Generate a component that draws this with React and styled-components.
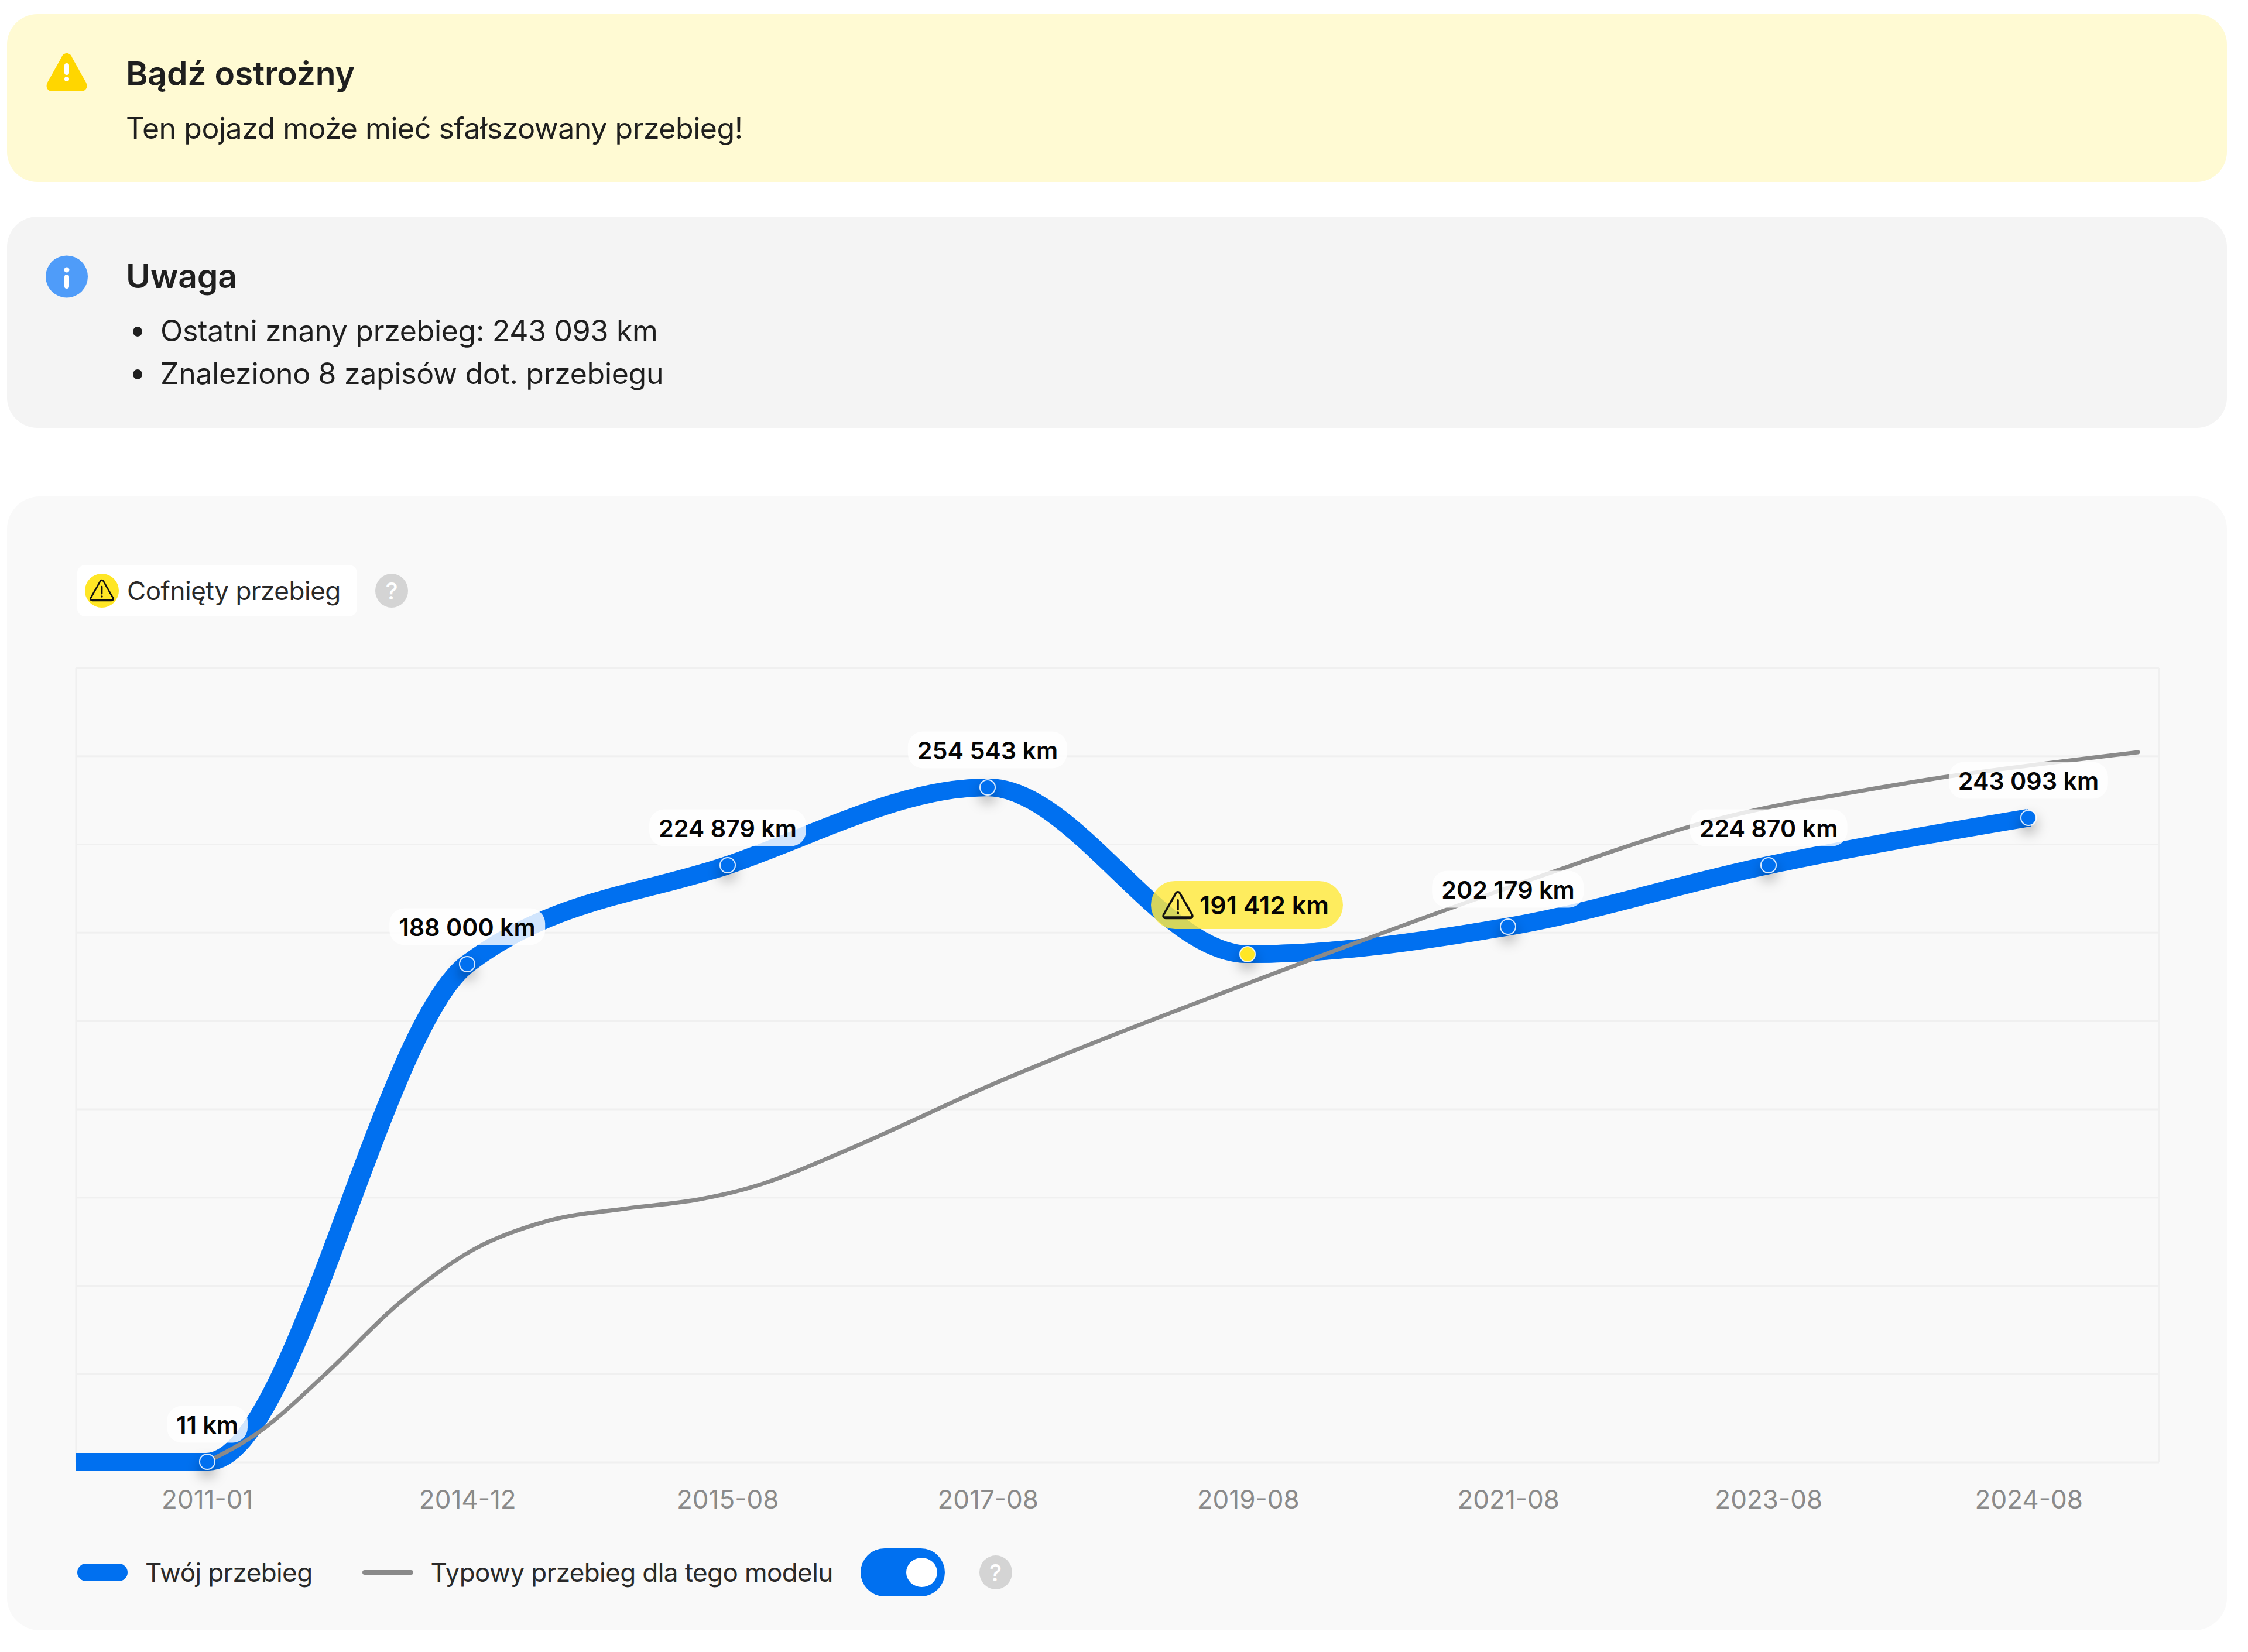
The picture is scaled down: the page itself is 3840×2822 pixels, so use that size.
import React from "react";
import styled, { createGlobalStyle } from "styled-components";

const PLOT_X = 130;
const PLOT_Y = 1140;
const PLOT_W = 3558;
const PLOT_H = 1357;

const mileage = [
  { x: 354, y: 2496, label: "11 km", date: "2011-01" },
  { x: 798, y: 1646, label: "188 000 km", date: "2014-12" },
  { x: 1243, y: 1477, label: "224 879 km", date: "2015-08" },
  { x: 1687, y: 1344, label: "254 543 km", date: "2017-08" },
  { x: 2131, y: 1629, label: "191 412 km", date: "2019-08", warn: true },
  { x: 2576, y: 1582, label: "202 179 km", date: "2021-08" },
  { x: 3021, y: 1477, label: "224 870 km", date: "2023-08" },
  { x: 3465, y: 1396, label: "243 093 km", date: "2024-08" },
];

const typical = [
  [354, 2496],
  [447, 2442],
  [555, 2347],
  [683, 2224],
  [810, 2133],
  [938, 2084],
  [1065, 2064],
  [1193, 2048],
  [1300, 2022],
  [1455, 1960],
  [1710, 1845],
  [2131, 1679],
  [2668, 1483],
  [2883, 1412],
  [3021, 1378],
  [3138, 1357],
  [3331, 1325],
  [3652, 1284],
];

// same idea as d3 curveMonotoneX
const monotonePath = (pts) => {
  const n = pts.length;
  const slopes = [];
  for (let i = 0; i < n - 1; i++) {
    slopes.push((pts[i + 1][1] - pts[i][1]) / (pts[i + 1][0] - pts[i][0]));
  }
  const inner = pts.map((_, i) => {
    if (i === 0 || i === n - 1) return 0;
    const a = slopes[i - 1];
    const b = slopes[i];
    if (a * b <= 0) return 0;
    return Math.sign(a) * Math.min(Math.abs(a), Math.abs(b), Math.abs(a + b) / 4) * 2;
  });
  inner[0] = (3 * slopes[0] - inner[1]) / 2;
  inner[n - 1] = (3 * slopes[n - 2] - inner[n - 2]) / 2;
  let d = `M${pts[0][0]} ${pts[0][1]}`;
  for (let i = 0; i < n - 1; i++) {
    const h = (pts[i + 1][0] - pts[i][0]) / 3;
    d += `C${pts[i][0] + h} ${pts[i][1] + inner[i] * h} ${pts[i + 1][0] - h} ${pts[i + 1][1] - inner[i + 1] * h} ${pts[i + 1][0]} ${pts[i + 1][1]}`;
  }
  return d;
};

const GlobalStyle = createGlobalStyle`
  html, body {
    margin: 0;
    padding: 0;
    background: #fff;
  }
  body {
    font-family: Inter, "Noto Sans", sans-serif;
    color: #1f1f1f;
  }
`;

const Page = styled.div`
  width: 3792px;
  padding: 24px 24px 38px 12px;
  display: flex;
  flex-direction: column;
`;

const Alert = styled.div`
  display: grid;
  grid-template-columns: 72px 1fr;
  column-gap: 65px;
  padding: ${(p) => p.$padding};
  margin-bottom: ${(p) => p.$after};
  height: ${(p) => p.$height};
  box-sizing: border-box;
  border-radius: 52px;
  background: ${(p) => p.$bg};
`;

const AlertBody = styled.div`
  display: flex;
  flex-direction: column;
`;

const AlertTitle = styled.div`
  font-size: 57px;
  font-weight: 600;
  line-height: 72px;
  letter-spacing: -0.2px;
  margin-bottom: 21px;
`;

const AlertText = styled.div`
  font-size: 50px;
  line-height: 72px;
  letter-spacing: -0.47px;
`;

const Bullets = styled.ul`
  margin: 0;
  padding: 0;
  list-style: none;
  font-size: 50px;
  line-height: 73px;
  letter-spacing: -0.3px;
`;

const Bullet = styled.li`
  display: flex;
  align-items: center;
  &::before {
    content: "";
    width: 16px;
    height: 17px;
    margin: 2px 31px 0 12px;
    border-radius: 50%;
    background: #1f1f1f;
  }
`;

const ChartCard = styled.section`
  height: 1937px;
  box-sizing: border-box;
  padding: 117px 116px 0 118px;
  border-radius: 56px;
  background: #f9f9f9;
`;

const FlagRow = styled.div`
  display: flex;
  align-items: center;
  gap: 31px;
  height: 88px;
  margin-left: 2px;
  margin-bottom: 88px;
`;

const Flag = styled.div`
  display: flex;
  align-items: center;
  gap: 14px;
  width: 478px;
  height: 88px;
  box-sizing: border-box;
  padding-left: 13px;
  border-radius: 14px;
  background: #fff;
  font-size: 44px;
  letter-spacing: -0.45px;
  color: #2a2a2a;
`;

const FlagDot = styled.span`
  display: flex;
  align-items: center;
  justify-content: center;
  width: 58px;
  height: 58px;
  border-radius: 50%;
  background: #ffe625;
`;

const Help = styled.span`
  display: flex;
  align-items: center;
  justify-content: center;
  width: 56px;
  height: 58px;
  border-radius: 50%;
  background: #d4d4d4;
  color: #fff;
  font-size: 40px;
  font-weight: 500;
  letter-spacing: 0;
`;

const Plot = styled.div`
  position: relative;
  width: ${PLOT_W}px;
  height: ${PLOT_H}px;
`;

const PlotSvg = styled.svg`
  display: block;
  overflow: visible;
`;

const ValueLabel = styled.div`
  position: absolute;
  display: flex;
  align-items: center;
  gap: 10px;
  transform: translate(-50%, -50%);
  white-space: nowrap;
  height: ${(p) => (p.$warn ? 82 : 63)}px;
  padding: ${(p) => (p.$warn ? "0 24px 0 19px" : "0 16px")};
  border-radius: ${(p) => (p.$warn ? 41 : 26)}px;
  background: ${(p) => (p.$warn ? "rgba(255, 233, 63, 0.83)" : "rgba(255, 255, 255, 0.82)")};
  font-size: ${(p) => (p.$warn ? 43 : 41.3)}px;
  font-weight: 600;
  color: #050505;
`;

const AxisRow = styled.div`
  display: grid;
  grid-template-columns: repeat(8, 444.5px);
  margin: 38px 0 0 2px;
  height: 50px;
`;

const AxisTick = styled.span`
  text-align: center;
  font-size: 44px;
  line-height: 50px;
  color: #8a8a8a;
`;

const Legend = styled.div`
  display: flex;
  align-items: center;
  height: 82px;
  margin: 59px 0 0 2px;
  font-size: 44px;
  letter-spacing: -0.6px;
  color: #2a2a2a;
`;

const Swatch = styled.span`
  width: ${(p) => p.$w}px;
  height: ${(p) => p.$h}px;
  margin-right: 30px;
  border-radius: ${(p) => p.$h / 2}px;
  background: ${(p) => p.$color};
`;

const LegendText = styled.span`
  margin-right: ${(p) => p.$after}px;
`;

const Toggle = styled.span`
  display: flex;
  align-items: center;
  justify-content: flex-end;
  width: 144px;
  height: 82px;
  box-sizing: border-box;
  padding-right: 13px;
  margin-right: 59px;
  border-radius: 41px;
  background: #0070f0;
`;

const Thumb = styled.span`
  width: 53px;
  height: 50px;
  border-radius: 50%;
  background: #fff;
`;

const WarningIcon = () => (
  <svg width="72" height="68" viewBox="0 0 72 68">
    <path
      d="M36 1C40 1 43 3 45 8L69 51C73 60 68 66 60 66L12 66C4 66 -1 60 3 51L27 8C29 3 32 1 36 1Z"
      fill="#ffd600"
    />
    <rect x="32" y="18" width="8" height="20" rx="4" fill="#fff" />
    <circle cx="36" cy="45" r="4" fill="#fff" />
  </svg>
);

const InfoIcon = () => (
  <svg width="72" height="73" viewBox="0 0 72 73">
    <circle cx="36" cy="36.5" r="36" fill="#4f9cf9" />
    <circle cx="36" cy="25" r="4.5" fill="#fff" />
    <rect x="32" y="33" width="8" height="24" rx="4" fill="#fff" />
  </svg>
);

const TriangleMark = ({ size }) => (
  <svg width={size} height={size * 0.93} viewBox="0 0 52 48" fill="none">
    <path
      d="M26 2.5C27.5 2.5 28.6 3.3 29.4 4.7L49.3 39.5C50.9 42.4 49.6 45.5 46 45.5L6 45.5C2.4 45.5 1.1 42.4 2.7 39.5L22.6 4.7C23.4 3.3 24.5 2.5 26 2.5Z"
      stroke="#111"
      strokeWidth="3.4"
      strokeLinejoin="round"
    />
    <path d="M4 44.5L48 44.5" stroke="#111" strokeWidth="4" strokeLinecap="round" />
    <path d="M26 16L26 31" stroke="#111" strokeWidth="3.4" strokeLinecap="round" />
    <circle cx="26" cy="37" r="2.2" fill="#111" />
  </svg>
);

const App = () => {
  const bluePoints = [[PLOT_X + 2, 2496], ...mileage.map((p) => [p.x, p.y])];
  return (
    <>
      <GlobalStyle />
      <Page>
        <Alert $bg="#fffad3" $height="287px" $after="59px" $padding="66px 66px 0">
          <WarningIcon />
          <AlertBody>
            <AlertTitle>Bądź ostrożny</AlertTitle>
            <AlertText>Ten pojazd może mieć sfałszowany przebieg!</AlertText>
          </AlertBody>
        </Alert>
        <Alert $bg="#f4f4f4" $height="361px" $after="117px" $padding="66px 66px 0">
          <InfoIcon />
          <AlertBody>
            <AlertTitle>Uwaga</AlertTitle>
            <Bullets>
              <Bullet>Ostatni znany przebieg: 243 093 km</Bullet>
              <Bullet>Znaleziono 8 zapisów dot. przebiegu</Bullet>
            </Bullets>
          </AlertBody>
        </Alert>
        <ChartCard>
          <FlagRow>
            <Flag>
              <FlagDot>
                <TriangleMark size={42} />
              </FlagDot>
              Cofnięty przebieg
            </Flag>
            <Help>?</Help>
          </FlagRow>
          <Plot>
            <PlotSvg
              width={PLOT_W}
              height={PLOT_H}
              viewBox={`${PLOT_X} ${PLOT_Y} ${PLOT_W} ${PLOT_H}`}
            >
              <defs>
                <filter id="dotShadow" x="-200%" y="-200%" width="500%" height="500%">
                  <feDropShadow dx="0" dy="12" stdDeviation="11" floodColor="#000" floodOpacity="0.32" />
                </filter>
              </defs>
              {Array.from({ length: 10 }, (_, i) => (
                <line
                  key={i}
                  x1={PLOT_X}
                  x2={PLOT_X + PLOT_W}
                  y1={PLOT_Y + (PLOT_H / 9) * i}
                  y2={PLOT_Y + (PLOT_H / 9) * i}
                  stroke="#f0f0f0"
                  strokeWidth="3"
                />
              ))}
              <line x1={PLOT_X} x2={PLOT_X} y1={PLOT_Y} y2={PLOT_Y + PLOT_H} stroke="#f0f0f0" strokeWidth="3" />
              <line
                x1={PLOT_X + PLOT_W}
                x2={PLOT_X + PLOT_W}
                y1={PLOT_Y}
                y2={PLOT_Y + PLOT_H}
                stroke="#f0f0f0"
                strokeWidth="3"
              />
              {/* the line is wider on steep parts than on flat ones, so two copies side by side */}
              {[-2, 2].map((dx) => (
                <path
                  key={dx}
                  d={monotonePath(bluePoints)}
                  transform={`translate(${dx} 0)`}
                  fill="none"
                  stroke="#0070f0"
                  strokeWidth="30"
                />
              ))}
              <path
                d={monotonePath(typical)}
                fill="none"
                stroke="#8a8a8a"
                strokeWidth="7"
                strokeLinecap="round"
              />
              {mileage.map((p) => (
                <circle
                  key={p.date}
                  cx={p.x}
                  cy={p.y}
                  r="13"
                  fill={p.warn ? "#ffe625" : "#0070f0"}
                  stroke="#fff"
                  strokeOpacity="0.85"
                  strokeWidth="2"
                  filter="url(#dotShadow)"
                />
              ))}
            </PlotSvg>
            {mileage.map((p) => (
              <ValueLabel
                key={p.date}
                $warn={p.warn}
                style={{
                  left: p.warn ? 2000 : p.x - PLOT_X,
                  top: p.y - PLOT_Y - (p.warn ? 84 : 64),
                }}
              >
                {p.warn && <TriangleMark size={54} />}
                {p.label}
              </ValueLabel>
            ))}
          </Plot>
          <AxisRow>
            {mileage.map((p) => (
              <AxisTick key={p.date}>{p.date}</AxisTick>
            ))}
          </AxisRow>
          <Legend>
            <Swatch $w={86} $h={30} $color="#0070f0" />
            <LegendText $after={85}>Twój przebieg</LegendText>
            <Swatch $w={87} $h={8} $color="#8a8a8a" />
            <LegendText $after={47}>Typowy przebieg dla tego modelu</LegendText>
            <Toggle>
              <Thumb />
            </Toggle>
            <Help>?</Help>
          </Legend>
        </ChartCard>
      </Page>
    </>
  );
};

export default App;
